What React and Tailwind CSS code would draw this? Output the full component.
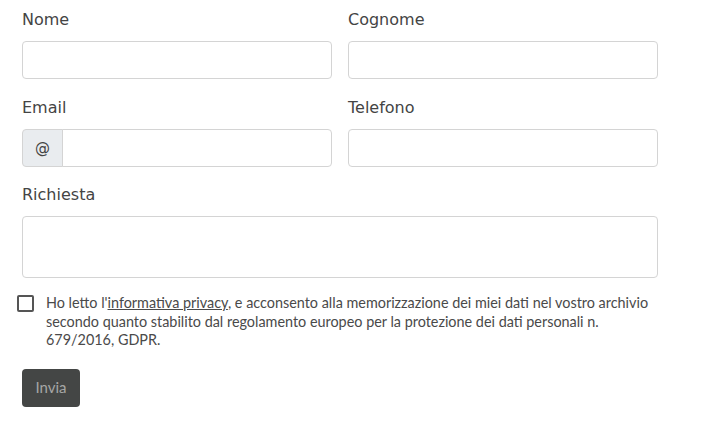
export default function App() {
  const label = "block text-[16px] leading-6 text-[#444] mb-[9px]";
  const input = "block w-full h-[38px] rounded border border-[#d4d4d4] bg-white";
  return (
    <div className="min-h-screen bg-white" style={{ fontFamily: "'DejaVu Sans', sans-serif" }}>
      <form className="w-[636px] ml-[22px] pt-[8px]">
        <div className="grid grid-cols-[310px_1fr] gap-x-[16px] gap-y-[17px]">
          <div>
            <label className={label}>Nome</label>
            <input className={input} />
          </div>
          <div>
            <label className={label}>Cognome</label>
            <input className={input} />
          </div>
          <div>
            <label className={label}>Email</label>
            <div className="flex h-[38px]">
              <span className="flex w-[41px] items-center justify-center rounded-l border border-[#d4d4d4] bg-[#e9ecef] text-[15px] text-[#444]">
                @
              </span>
              <input className="block flex-1 -ml-px rounded-r border border-[#d4d4d4] bg-white" />
            </div>
          </div>
          <div>
            <label className={label}>Telefono</label>
            <input className={input} />
          </div>
          <div className="col-span-2 -mt-px">
            <label className={label}>Richiesta</label>
            <textarea className="block w-full h-[62px] resize-none rounded border border-[#d4d4d4] bg-white" />
          </div>
        </div>
        <div className="mt-[16px] -ml-[5px] flex items-start gap-[12px]">
          <span className="mt-[1px] h-[17px] w-[17px] shrink-0 rounded-[2px] border-2 border-[#555]" />
          <p
            className="text-[14.4px] leading-[18.5px] text-[#4a4a4a]"
            style={{ fontFamily: "Lato, sans-serif" }}
          >
            Ho letto l'<a className="underline">informativa privacy</a>, e acconsento alla memorizzazione dei miei dati nel vostro archivio secondo quanto stabilito dal regolamento europeo per la protezione dei dati personali n. 679/2016, GDPR.
          </p>
        </div>
        <button
          type="button"
          className="mt-[19px] h-[38px] w-[58px] rounded bg-[#444645] text-[15px] text-[#a6a6a6]"
          style={{ fontFamily: "Lato, sans-serif" }}
        >
          Invia
        </button>
      </form>
    </div>
  );
}
